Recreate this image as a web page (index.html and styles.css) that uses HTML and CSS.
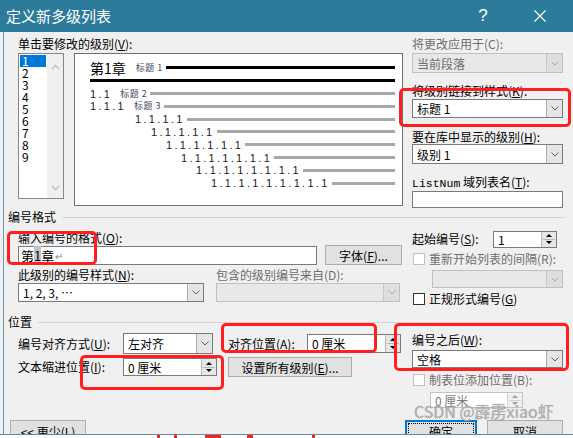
FILE: index.html
```html
<!DOCTYPE html>
<html lang="zh-CN">
<head>
<meta charset="utf-8">
<title>定义新多级列表</title>
<link rel="stylesheet" href="styles.css">
</head>
<body>
<div class="win">
  <div class="titlebar">
    <span class="title">定义新多级列表</span>
    <span class="help">?</span>
    <span class="close"><svg width="12" height="12" viewBox="0 0 12 12"><path d="M0.5 0.5L11.5 11.5M11.5 0.5L0.5 11.5" stroke="#fff" stroke-width="1.2"/></svg></span>
  </div>
  <div class="content">
    <div class="top">
      <div class="col-left">
        <div class="lbl">单击要修改的级别(<u>V</u>):</div>
        <div class="top-row">
          <div class="listbox">
            <div class="items">
              <div class="item sel">1</div>
              <div class="item">2</div>
              <div class="item">3</div>
              <div class="item">4</div>
              <div class="item">5</div>
              <div class="item">6</div>
              <div class="item">7</div>
              <div class="item">8</div>
              <div class="item">9</div>
            </div>
            <div class="lscroll">
              <svg width="9" height="6" viewBox="0 0 9 6"><path d="M1 5L4.5 1.5L8 5" stroke="#c4c4c4" stroke-width="1.6" fill="none"/></svg>
              <svg width="9" height="6" viewBox="0 0 9 6"><path d="M1 1L4.5 4.5L8 1" stroke="#c4c4c4" stroke-width="1.6" fill="none"/></svg>
            </div>
          </div>
          <div class="preview">
            <div class="pv-row"><span class="ch">第1章</span><span class="sty">标题 1</span><span class="bar black"></span></div>
            <div class="pv-row"><span class="bar black"></span></div>
            <div class="pv-row"><span class="num n-s">1.1</span><span class="sty">标题 2</span><span class="bar"></span></div>
            <div class="pv-row"><span class="num n-s">1.1.1</span><span class="sty">标题 3</span><span class="bar"></span></div>
            <div class="pv-row i4"><span class="num">1.1.1.1</span><span class="bar"></span></div>
            <div class="pv-row i5"><span class="num">1.1.1.1.1</span><span class="bar"></span></div>
            <div class="pv-row i6"><span class="num">1.1.1.1.1.1</span><span class="bar"></span></div>
            <div class="pv-row i7"><span class="num">1.1.1.1.1.1.1</span><span class="bar"></span></div>
            <div class="pv-row i8"><span class="num">1.1.1.1.1.1.1.1</span><span class="bar"></span></div>
            <div class="pv-row i9"><span class="num">1.1.1.1.1.1.1.1.1</span><span class="bar"></span></div>
          </div>
        </div>
      </div>
      <div class="col-right">
        <div class="lbl dis">将更改应用于(C):</div>
        <div class="combo dis c1"><span class="val">当前段落</span><span class="dd"><svg width="8" height="5" viewBox="0 0 8 5"><path d="M0.5 0.5L4 4L7.5 0.5" fill="none" stroke="#a8a8a8"/></svg></span></div>
        <div class="lbl g2">将级别链接到样式(<u>K</u>):</div>
        <div class="combo c2"><span class="val">标题 1</span><span class="dd"><svg width="8" height="5" viewBox="0 0 8 5"><path d="M0.5 0.5L4 4L7.5 0.5" fill="none" stroke="#606060"/></svg></span></div>
        <div class="lbl g3">要在库中显示的级别(<u>H</u>):</div>
        <div class="combo c3"><span class="val">级别 1</span><span class="dd"><svg width="8" height="5" viewBox="0 0 8 5"><path d="M0.5 0.5L4 4L7.5 0.5" fill="none" stroke="#606060"/></svg></span></div>
        <div class="lbl g4"><span class="mono">ListNum</span> 域列表名(<u>T</u>):</div>
        <div class="textbox listnum-box"></div>
      </div>
    </div>

    <div class="sec">编号格式</div>
    <div class="fmt">
      <div class="fmt-left">
        <div class="lbl f1">输入编号的格式(<u>O</u>):</div>
        <div class="row-in">
          <div class="textbox fmt-in"><span>第</span><span class="hl">1</span><span>章</span><span class="ret">↵</span></div>
          <div class="btn font-btn">字体(<u>F</u>)...</div>
        </div>
        <div class="pair lbl-pair">
          <div class="lbl">此级别的编号样式(<u>N</u>):</div>
          <div class="lbl dis">包含的级别编号来自(D):</div>
        </div>
        <div class="pair combo-pair">
          <div class="combo h19"><span class="val">1, 2, 3, …</span><span class="dd"><svg width="8" height="5" viewBox="0 0 8 5"><path d="M0.5 0.5L4 4L7.5 0.5" fill="none" stroke="#606060"/></svg></span></div>
          <div class="combo dis h19"><span class="val"></span><span class="dd"><svg width="8" height="5" viewBox="0 0 8 5"><path d="M0.5 0.5L4 4L7.5 0.5" fill="none" stroke="#a8a8a8"/></svg></span></div>
        </div>
      </div>
      <div class="fmt-right">
        <div class="start-row">
          <span class="lbl">起始编号(<u>S</u>):</span>
          <div class="spin start-spin"><span class="sv">1</span><span class="sb"><span class="sbh"><svg width="6" height="3" viewBox="0 0 6 3"><path d="M0 3L3 0L6 3Z" fill="#000"/></svg></span><span class="sbh"><svg width="6" height="3" viewBox="0 0 6 3"><path d="M0 0L3 3L6 0Z" fill="#000"/></svg></span></span></div>
        </div>
        <div class="chk-row r1"><span class="chk dis"></span><span class="lbl dis">重新开始列表的间隔(R):</span></div>
        <div class="combo dis restart"><span class="val"></span><span class="dd"><svg width="8" height="5" viewBox="0 0 8 5"><path d="M0.5 0.5L4 4L7.5 0.5" fill="none" stroke="#a8a8a8"/></svg></span></div>
        <div class="chk-row r2"><span class="chk"></span><span class="lbl">正规形式编号(<u>G</u>)</span></div>
      </div>
    </div>

    <div class="sec">位置</div>
    <div class="pos">
      <div class="colA">
        <div class="prow p1">
          <span class="lbl wA">编号对齐方式(<u>U</u>):</span>
          <div class="combo align-combo"><span class="val">左对齐</span><span class="dd"><svg width="8" height="5" viewBox="0 0 8 5"><path d="M0.5 0.5L4 4L7.5 0.5" fill="none" stroke="#606060"/></svg></span></div>
        </div>
        <div class="prow p2">
          <span class="lbl wA">文本缩进位置(<u>I</u>):</span>
          <div class="spin indent-spin"><span class="sv">0 厘米</span><span class="sb"><span class="sbh"><svg width="6" height="3" viewBox="0 0 6 3"><path d="M0 3L3 0L6 3Z" fill="#000"/></svg></span><span class="sbh"><svg width="6" height="3" viewBox="0 0 6 3"><path d="M0 0L3 3L6 0Z" fill="#000"/></svg></span></span></div>
        </div>
      </div>
      <div class="colB">
        <div class="prow p1">
          <span class="lbl wB">对齐位置(<u>A</u>):</span>
          <div class="spin at-spin"><span class="sv">0 厘米</span><span class="sb"><span class="sbh"><svg width="6" height="3" viewBox="0 0 6 3"><path d="M0 3L3 0L6 3Z" fill="#000"/></svg></span><span class="sbh"><svg width="6" height="3" viewBox="0 0 6 3"><path d="M0 0L3 3L6 0Z" fill="#000"/></svg></span></span></div>
        </div>
        <div class="prow p2">
          <div class="btn all-btn">设置所有级别(<u>E</u>)...</div>
        </div>
      </div>
      <div class="colC">
        <div class="lbl after-lbl">编号之后(<u>W</u>):</div>
        <div class="combo after-combo"><span class="val">空格</span><span class="dd"><svg width="8" height="5" viewBox="0 0 8 5"><path d="M0.5 0.5L4 4L7.5 0.5" fill="none" stroke="#606060"/></svg></span></div>
        <div class="chk-row r3"><span class="chk dis"></span><span class="lbl dis">制表位添加位置(B):</span></div>
        <div class="spin dis tab-spin"><span class="sv">0 厘米</span><span class="sb"><span class="sbh"><svg width="6" height="3" viewBox="0 0 6 3"><path d="M0 3L3 0L6 3Z" fill="#a0a0a0"/></svg></span><span class="sbh"><svg width="6" height="3" viewBox="0 0 6 3"><path d="M0 0L3 3L6 0Z" fill="#a0a0a0"/></svg></span></span></div>
      </div>
    </div>

    <div class="bottom">
      <div class="btn less-btn">&lt;&lt; 更少(<u>L</u>)</div>
      <div class="btn ok-btn"><span class="focus">确定</span></div>
      <div class="btn cancel-btn">取消</div>
    </div>
  </div>
</div>

<div class="watermark">CSDN @霹雳xiao虾</div>

<div class="mark m1"></div>
<div class="mark m2"></div>
<div class="mark m3"></div>
<div class="mark m4"></div>
<div class="mark m5"></div>

<div class="tick tk1"></div>
<div class="tick tk2"></div>
<div class="tick tk3"></div>
<div class="tick tk4"></div>
<div class="tick tk5"></div>
</body>
</html>
```

FILE: styles.css
```css
* { box-sizing: border-box; margin: 0; padding: 0; }

body {
  width: 573px;
  height: 438px;
  background: #ffffff;
  font-family: "Noto Sans CJK SC", "Liberation Sans", sans-serif;
  font-size: 12px;
  color: #000;
  overflow: hidden;
  position: relative;
}

u { text-decoration: underline; text-underline-offset: 1px; }

.win {
  width: 573px;
  height: 435px;
  background: #f0f0f0;
  border-bottom: 1px solid #5f8ca5;
  overflow: hidden;
}

.titlebar {
  height: 32px;
  background: #2c7b9a;
  display: flex;
  align-items: center;
  color: #fff;
}
.title { font-size: 15px; line-height: 20px; margin-left: 6px; }
.help {
  margin-left: auto;
  width: 20px;
  text-align: center;
  font-family: "Liberation Sans", sans-serif;
  font-size: 17px;
  line-height: 20px;
}
.close { margin-left: 41px; margin-right: 27px; display: flex; }

.content {
  margin-left: 3px;
  border-left: 1px solid #6f97ad;
  height: 402px;
  padding: 5px 10px 0 14px;
  overflow: hidden;
}

.lbl { height: 14px; line-height: 14px; white-space: nowrap; }
.dis { color: #6d6d6d; }

/* ---------- top ---------- */
.top { display: flex; height: 173px; }
.col-left { width: 385px; }
.col-right { width: 151px; margin-left: 9px; display: flex; flex-direction: column; }

.top-row { display: flex; margin-top: 2px; }

.listbox {
  width: 46px;
  height: 146px;
  border: 1px solid #828790;
  background: #fff;
  display: flex;
}
.items { width: 28px; padding: 1px 1px 0 1px; }
.item { height: 12px; line-height: 12px; padding-left: 2px; font-size: 12px; }
.item.sel { background: #0078d7; color: #fff; }
.lscroll {
  flex: 1;
  background: #f0f0f0;
  display: flex;
  flex-direction: column;
  justify-content: space-between;
  align-items: center;
  padding: 10px 0 7px;
}

.preview {
  margin-left: 10px;
  width: 329px;
  height: 153px;
  border: 1px solid #6e6e6e;
  background: #fff;
  padding: 7.6px 7px 0 15px;
}
.pv-row { height: 12.8px; display: flex; align-items: center; }
.bar { flex: 1; height: 3px; background: #a8a8a8; }
.bar.black { background: #000; }
.ch { font-size: 14px; line-height: 14px; margin-right: 10px; }
.sty {
  font-size: 9px;
  line-height: 10px;
  color: #3e4560;
  letter-spacing: 0.5px;
  margin-right: 3px;
  white-space: nowrap;
}
.num {
  font-family: "Liberation Sans", sans-serif;
  font-size: 11px;
  line-height: 12px;
  letter-spacing: 2.3px;
  color: #1a1a1a;
  margin-right: 2px;
  white-space: nowrap;
}
.num.n-s { margin-right: 8px; }
.i4 { padding-left: 45px; }
.i5 { padding-left: 61px; }
.i6 { padding-left: 76px; }
.i7 { padding-left: 91px; }
.i8 { padding-left: 106px; }
.i9 { padding-left: 121px; }

/* ---------- controls ---------- */
.combo {
  display: flex;
  align-items: stretch;
  border: 1px solid #7a7a7a;
  background: #fff;
}
.combo .val { flex: 1; padding-left: 4px; display: flex; align-items: center; white-space: nowrap; }
.combo .dd {
  width: 16px;
  background: #e5e5e5;
  border-left: 1px solid #adadad;
  display: flex;
  align-items: center;
  justify-content: center;
}
.combo.dis { background: #e8e8e8; border-color: #c0c0c0; }
.combo.dis .dd { background: #dedede; border-left-color: #c8c8c8; }

.c1 { margin-top: 2px; height: 20px; }
.g2 { margin-top: 11px; }
.c2 { margin-top: 1px; height: 19px; }
.g3 { margin-top: 12px; }
.c3 { height: 20px; }
.g4 { margin-top: 11px; }
.mono { font-family: "Liberation Mono", monospace; font-size: 11.5px; }

.textbox { border: 1px solid #7a7a7a; background: #fff; }
.listnum-box { margin-top: 2px; height: 17px; width: 151px; }

.btn {
  background: #e1e1e1;
  border: 1px solid #adadad;
  display: flex;
  align-items: center;
  justify-content: center;
  white-space: nowrap;
}

.spin { display: flex; border: 1px solid #7a7a7a; background: #fff; }
.spin .sv { flex: 1; padding-left: 4px; display: flex; align-items: center; white-space: nowrap; }
.spin .sb {
  width: 15px;
  display: flex;
  flex-direction: column;
  background: #e6e6e6;
  border-left: 1px solid #b8b8b8;
  padding: 1px;
}
.spin .sbh { flex: 1; display: flex; align-items: center; justify-content: center; }
.spin .sbh + .sbh { border-top: 1px solid #b8b8b8; }
.spin.dis { border-color: #c4c4c4; color: #7a7a7a; }
.spin.dis .sb { background: #f0f0f0; border-left-color: #d4d4d4; }
.spin.dis .sbh + .sbh { border-top-color: #d4d4d4; }

.chk { width: 12px; height: 12px; border: 1px solid #333; background: #fff; margin-left: 1px; }
.chk.dis { border-color: #c0c0c0; background: #fff; }
.chk-row { display: flex; align-items: center; height: 12px; }
.chk-row .lbl { margin-left: 4px; }

/* ---------- section heads ---------- */
.sec {
  display: flex;
  align-items: center;
  height: 14px;
  line-height: 14px;
  margin-left: -10px;
  margin-right: -2px;
  white-space: nowrap;
}
.sec::after {
  content: "";
  flex: 1;
  height: 1px;
  background: #d5d5d5;
  margin-left: 6px;
}

/* ---------- number format ---------- */
.fmt { display: flex; height: 91px; }
.fmt-left { width: 384px; }
.f1 { margin-top: 7px; }
.row-in { display: flex; align-items: flex-start; }
.fmt-in {
  width: 299px;
  height: 19px;
  margin-top: 1px;
  display: flex;
  align-items: center;
  padding-left: 2px;
  font-size: 13px;
}
.fmt-in .hl { background: #c4c4c4; }
.fmt-in .ret { color: #8a8a8a; font-size: 10px; margin-left: 1px; }
.font-btn { margin-left: 8px; width: 77px; height: 20px; }

.pair { display: grid; grid-template-columns: 186px 184px; column-gap: 12px; }
.lbl-pair { margin-top: 3px; }
.combo-pair { margin-top: 1px; }
.h19 { height: 19px; }

.fmt-right { width: 151px; margin-left: 10px; }
.start-row { display: flex; align-items: center; height: 18px; margin-top: 6px; }
.start-spin { margin-left: auto; margin-right: 6px; width: 64px; height: 17px; }
.r1 { margin-top: 5px; }
.restart { margin-top: 5px; margin-left: 20px; height: 18px; }
.r2 { margin-top: 5px; }

/* ---------- position ---------- */
.pos { display: flex; height: 91px; }
.colA { width: 199px; }
.colB { width: 173px; margin-left: 11px; }
.colC { width: 151px; margin-left: 11px; }
.prow { display: flex; align-items: center; }
.prow.p1 { margin-top: 4px; height: 21px; }
.prow.p2 { margin-top: 3px; height: 20px; }
.wA { width: 105px; }
.wB { width: 79px; }
.align-combo { width: 90px; height: 21px; }
.indent-spin { width: 94px; height: 18px; }
.at-spin { width: 94px; height: 19px; }
.all-btn { width: 124px; height: 20px; }

.after-lbl { margin-top: 4px; }
.after-combo { margin-top: 3px; height: 18px; }
.r3 { margin-top: 6px; }
.tab-spin { margin-top: 6px; margin-left: 18px; width: 93px; height: 16px; }

/* ---------- bottom buttons ---------- */
.bottom { display: flex; height: 22px; }
.less-btn { margin-left: -8px; width: 76px; height: 22px; }
.ok-btn {
  margin-left: auto;
  width: 72px;
  height: 22px;
  border: 2px solid #0078d7;
  padding: 1px;
}
.ok-btn .focus {
  width: 100%;
  height: 100%;
  border: 1px dotted #000;
  display: flex;
  justify-content: center;
  align-items: center;
}
.cancel-btn { margin-left: 10px; width: 76px; height: 22px; }

/* ---------- overlays ---------- */
.watermark {
  position: absolute;
  left: 414px;
  top: 401px;
  font-size: 16px;
  line-height: 20px;
  color: rgba(175, 175, 175, 0.9);
  text-shadow: 0 0 1px rgba(120, 120, 120, 0.6);
  white-space: nowrap;
}

.mark {
  position: absolute;
  border: 3px solid #ff1f1f;
  border-radius: 5px;
}
.m1 { left: 399px; top: 88px; width: 172px; height: 39px; }
.m2 { left: 7px; top: 231px; width: 90px; height: 34px; }
.m3 { left: 221px; top: 323px; width: 156px; height: 30px; }
.m4 { left: 80px; top: 355px; width: 144px; height: 35px; }
.m5 { left: 394px; top: 323px; width: 175px; height: 48px; }

.tick { position: absolute; top: 435px; height: 3px; background: #ff1f1f; }
.tk1 { left: 157px; width: 3px; }
.tk2 { left: 174px; width: 3px; }
.tk3 { left: 205px; width: 16px; }
.tk4 { left: 247px; width: 6px; }
.tk5 { left: 312px; width: 3px; }
```
